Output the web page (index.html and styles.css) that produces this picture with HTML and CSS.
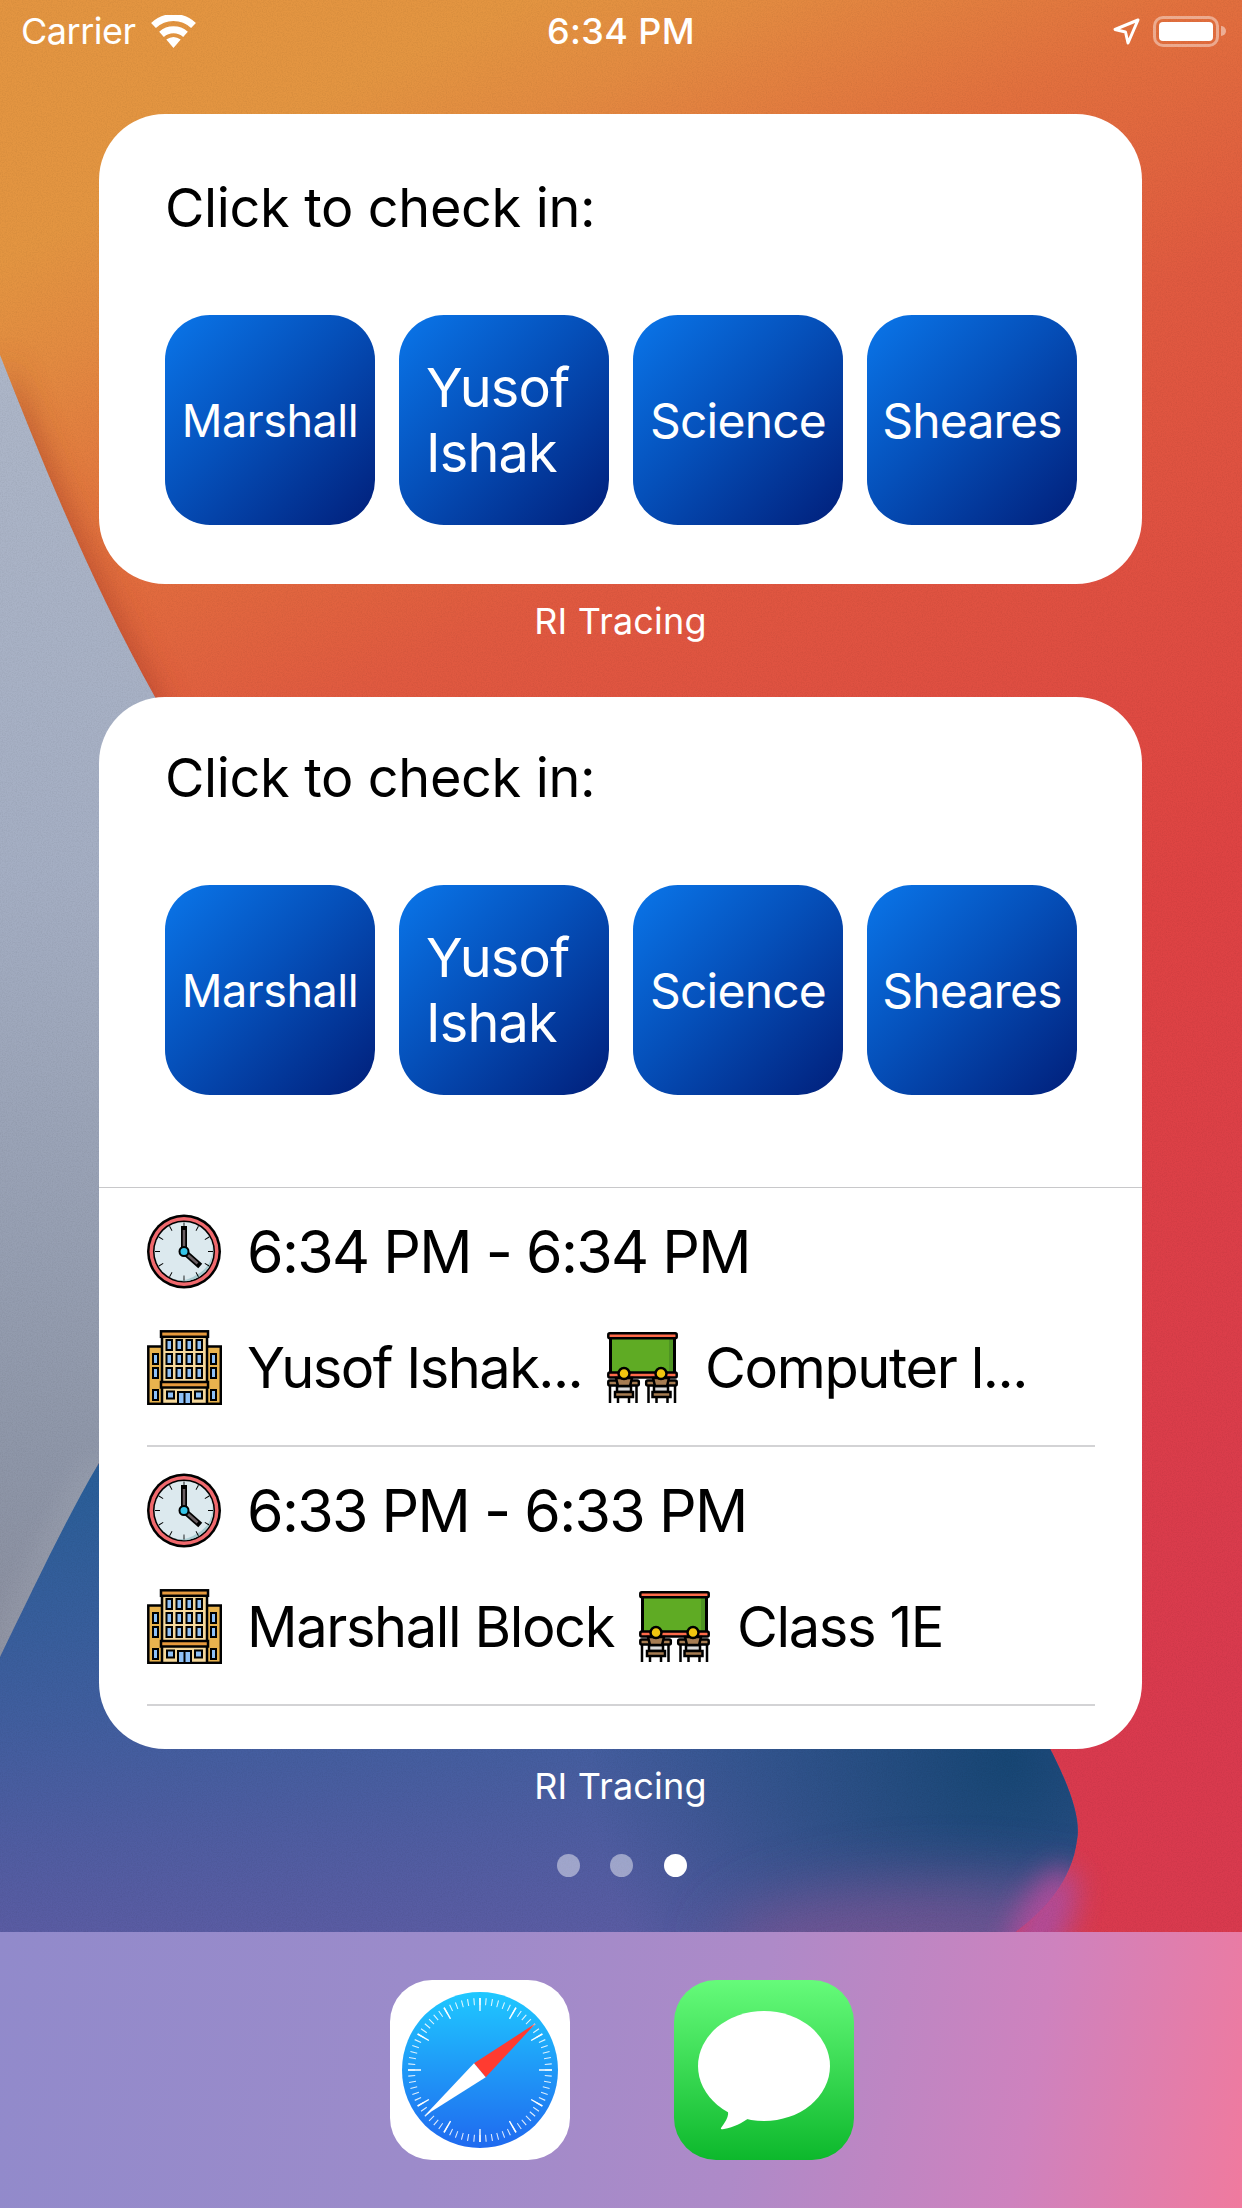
FILE: index.html
```html
<!DOCTYPE html>
<html lang="en">
<head>
<meta charset="utf-8">
<title>RI Tracing</title>
<link rel="stylesheet" href="styles.css">
</head>
<body>
<svg class="defs" width="0" height="0" aria-hidden="true">
  <defs>
    <symbol id="clock" viewBox="0 0 75 75">
      <circle cx="37" cy="37.5" r="37" fill="#000"/>
      <circle cx="37" cy="37.5" r="34.500" fill="#F0696D"/>
      <circle cx="37" cy="37.5" r="31" fill="#000"/>
      <circle cx="37" cy="37.5" r="29.500" fill="#DCE9EE"/>
      <path d="M60 20a29.500 29.500 0 0 1-37 44a26 26 0 0 0 26-3a27 27 0 0 0 11-41z" fill="#A9CBD0"/>
      <circle cx="37" cy="37.5" r="26.500" fill="none" stroke="#000" stroke-width="5" pathLength="360" stroke-dasharray="2 28" stroke-dashoffset="1"/>
      <path d="M37 36V15" stroke="#000" stroke-width="6" stroke-linecap="square"/>
      <path d="M37 36V16" stroke="#6A5F63" stroke-width="2.500"/>
      <path d="M38 38.500L51 50" stroke="#000" stroke-width="6" stroke-linecap="square"/>
      <path d="M38 38.500L50.500 49.500" stroke="#6A5F63" stroke-width="2.500"/>
      <circle cx="37" cy="37.500" r="4.500" fill="#35C5E8" stroke="#000" stroke-width="2"/>
    </symbol>
    <symbol id="building" viewBox="0 0 75 75">
      <g stroke="#000" stroke-width="2.500">
        <rect x="1.300" y="16.500" width="72.500" height="57.300" fill="#E9B34E"/>
        <rect x="15" y="6" width="45" height="68" fill="#F5D89B"/>
        <rect x="14" y="1.300" width="47" height="5.500" fill="#E79A3D"/>
        <rect x="14" y="52" width="47" height="5.500" fill="#E79A3D"/>
      </g>
      <g fill="#8FC1F7" stroke="#000" stroke-width="2">
        <rect x="19.500" y="10" width="5.500" height="10"/><rect x="29.500" y="10" width="5.500" height="10"/><rect x="39.500" y="10" width="5.500" height="10"/><rect x="49.500" y="10" width="5.500" height="10"/>
        <rect x="19.500" y="24" width="5.500" height="10"/><rect x="29.500" y="24" width="5.500" height="10"/><rect x="39.500" y="24" width="5.500" height="10"/><rect x="49.500" y="24" width="5.500" height="10"/>
        <rect x="19.500" y="38" width="5.500" height="10"/><rect x="29.500" y="38" width="5.500" height="10"/><rect x="39.500" y="38" width="5.500" height="10"/><rect x="49.500" y="38" width="5.500" height="10"/>
        <rect x="6" y="24" width="5" height="10"/><rect x="6" y="38" width="5" height="10"/><rect x="6" y="60" width="5" height="10"/>
        <rect x="64" y="24" width="5" height="10"/><rect x="64" y="38" width="5" height="10"/><rect x="64" y="60" width="5" height="10"/>
        <rect x="20" y="61.500" width="7" height="7"/><rect x="48" y="61.500" width="7" height="7"/>
        <rect x="31" y="62" width="13" height="12"/>
      </g>
      <path d="M37.500 62v12" stroke="#000" stroke-width="2"/>
    </symbol>
    <symbol id="classroom" viewBox="0 0 71 71">
      <rect x="3.500" y="5" width="64" height="37" fill="#5FAB24" stroke="#000" stroke-width="3"/>
      <rect x="62" y="6.500" width="4" height="34" fill="#4E9423"/>
      <rect x="1.300" y="1.300" width="68.400" height="5" rx="1.500" fill="#FF6B4A" stroke="#000" stroke-width="2.500"/>
      <rect x="1.300" y="40.500" width="68.400" height="5" rx="1.500" fill="#FF6B4A" stroke="#000" stroke-width="2.500"/>
      <g stroke="#000" stroke-width="2.500">
        <path d="M3 54v17M29.500 54v17M11 64v7M22 64v7M41.500 54v17M68 54v17M49.500 64v7M60.500 64v7" fill="none"/>
        <rect x="10" y="54" width="14" height="6" fill="#DADADA"/>
        <rect x="47" y="54" width="14" height="6" fill="#DADADA"/>
        <rect x="8" y="60" width="18" height="5" fill="#A67C52"/>
        <rect x="45.500" y="60" width="18" height="5" fill="#A67C52"/>
        <rect x="1.300" y="48.500" width="30.500" height="5" rx="1.500" fill="#A67C52"/>
        <rect x="39.200" y="48.500" width="30.500" height="5" rx="1.500" fill="#A67C52"/>
        <path d="M9 46h16l-2 8H11z" fill="#A67C52"/>
        <path d="M46 46h16l-2 8H48z" fill="#A67C52"/>
        <circle cx="17" cy="41.500" r="5.500" fill="#F2C60F"/>
        <circle cx="54" cy="41.500" r="5.500" fill="#F2C60F"/>
      </g>
    </symbol>
  </defs>
</svg>

<svg class="wallpaper" viewBox="0 0 1242 2208" aria-hidden="true">
  <defs>
    <linearGradient id="wp" x1="0.42" y1="0" x2="0.66" y2="0.85">
      <stop offset="0" stop-color="#E39541"/>
      <stop offset="0.06" stop-color="#E38B41"/>
      <stop offset="0.17" stop-color="#E2703E"/>
      <stop offset="0.3" stop-color="#E05A40"/>
      <stop offset="0.6" stop-color="#DE4343"/>
      <stop offset="1" stop-color="#D93A4E"/>
    </linearGradient>
    <linearGradient id="gray" x1="0" y1="350" x2="0" y2="1660" gradientUnits="userSpaceOnUse">
      <stop offset="0" stop-color="#ADB6C8"/>
      <stop offset="0.4" stop-color="#A4AEC3"/>
      <stop offset="0.85" stop-color="#8E96A8"/>
      <stop offset="1" stop-color="#8A8E9E"/>
    </linearGradient>
    <linearGradient id="blue" x1="0" y1="1480" x2="0" y2="1932" gradientUnits="userSpaceOnUse">
      <stop offset="0" stop-color="#2A5E98"/>
      <stop offset="0.5" stop-color="#3F5E9E"/>
      <stop offset="1" stop-color="#5A5CA3"/>
    </linearGradient>
    <radialGradient id="dark" cx="1010" cy="1760" r="420" gradientUnits="userSpaceOnUse">
      <stop offset="0" stop-color="#174674" stop-opacity="1"/>
      <stop offset="1" stop-color="#174674" stop-opacity="0"/>
    </radialGradient>
    <clipPath id="blueClip">
      <path d="M0 1657C35 1585 68 1515 99 1463L620 1400L1040 1730C1065 1775 1082 1815 1077 1840C1072 1880 1045 1910 1015 1932H0Z"/>
    </clipPath>
    <filter id="soft" x="-50%" y="-50%" width="200%" height="200%"><feGaussianBlur stdDeviation="30"/></filter>
    <filter id="soft2" x="-50%" y="-50%" width="200%" height="200%"><feGaussianBlur stdDeviation="14"/></filter>
    <filter id="grain" x="0" y="0" width="100%" height="100%">
      <feTurbulence type="fractalNoise" baseFrequency="0.8" numOctaves="2" seed="4"/>
      <feColorMatrix values="0 0 0 0 0  0 0 0 0 0  0 0 0 0 0  0.9 0 0 0 -0.35"/>
    </filter>
  </defs>
  <rect width="1242" height="2208" fill="url(#wp)"/>
  <path d="M0 355C45 470 95 590 155 697L99 1463L0 1660Z" fill="#A63A28" opacity="0.5" filter="url(#soft2)" transform="translate(8 0)"/>
  <path d="M0 355C45 470 95 590 155 697L300 1000L99 1463L0 1660Z" fill="url(#gray)"/>
  <path d="M99 1463C70 1510 35 1585 0 1657" fill="none" stroke="#C2C6CF" stroke-width="10" opacity="0.4" filter="url(#soft2)"/>
  <g clip-path="url(#blueClip)">
    <rect y="1400" width="1242" height="540" fill="url(#blue)"/>
    <rect y="1400" width="1242" height="540" fill="url(#dark)"/>
    <ellipse cx="950" cy="1950" rx="230" ry="70" fill="#7A5696" opacity="0.8" filter="url(#soft)"/>
  </g>
  <ellipse cx="1042" cy="1925" rx="26" ry="62" fill="#B04E9C" filter="url(#soft2)" opacity="0.95" transform="rotate(25 1042 1925)"/>
  <rect width="1242" height="2208" filter="url(#grain)" opacity="0.12"/>
</svg>

<main class="screen">
  <header class="status">
    <div class="status-left">
      <span class="carrier">Carrier</span>
      <svg class="wifi" viewBox="0 0 47 33" aria-hidden="true">
        <path d="M23.500 33L16.300 24.500Q23.500 19.500 30.700 24.500Z" fill="#fff"/>
        <path d="M11.500 19.300A18 18 0 0 1 35.500 19.300" fill="none" stroke="#fff" stroke-width="7"/>
        <path d="M3.500 10.500A29 29 0 0 1 43.500 10.500" fill="none" stroke="#fff" stroke-width="7"/>
      </svg>
    </div>
    <span class="clock-time">6:34 PM</span>
    <div class="status-right">
      <svg class="arrow" viewBox="0 0 27 27" aria-hidden="true">
        <path d="M25 2L2 11.500L12.500 14L15 25Z" fill="none" stroke="#fff" stroke-width="3" stroke-linejoin="round"/>
      </svg>
      <div class="battery"><div class="battery-fill"></div></div>
      <div class="battery-nub"></div>
    </div>
  </header>

  <div class="widgets">
    <section class="card card-small">
      <h2 class="title">Click to check in:</h2>
      <div class="buttons">
        <div class="btn btn-marshall">Marshall</div>
        <div class="btn btn-yusof">Yusof<br>Ishak</div>
        <div class="btn btn-std">Science</div>
        <div class="btn btn-std">Sheares</div>
      </div>
    </section>
    <div class="app-label">RI Tracing</div>

    <section class="card card-large">
      <h2 class="title">Click to check in:</h2>
      <div class="buttons">
        <div class="btn btn-marshall">Marshall</div>
        <div class="btn btn-yusof">Yusof<br>Ishak</div>
        <div class="btn btn-std">Science</div>
        <div class="btn btn-std">Sheares</div>
      </div>
      <div class="history">
        <div class="entry">
          <div class="line">
            <svg class="icon"><use href="#clock"/></svg>
            <span class="time">6:34 PM - 6:34 PM</span>
          </div>
          <div class="line">
            <svg class="icon"><use href="#building"/></svg>
            <span class="text trunc">Yusof Ishak...</span>
            <svg class="icon room"><use href="#classroom"/></svg>
            <span class="text">Computer l...</span>
          </div>
        </div>
        <div class="entry">
          <div class="line">
            <svg class="icon"><use href="#clock"/></svg>
            <span class="time">6:33 PM - 6:33 PM</span>
          </div>
          <div class="line">
            <svg class="icon"><use href="#building"/></svg>
            <span class="text">Marshall Block</span>
            <svg class="icon room"><use href="#classroom"/></svg>
            <span class="text">Class 1E</span>
          </div>
        </div>
      </div>
    </section>
    <div class="app-label">RI Tracing</div>
  </div>

  <div class="dots">
    <span class="dot"></span>
    <span class="dot"></span>
    <span class="dot dot-on"></span>
  </div>

  <footer class="dock">
    <svg class="app" viewBox="0 0 180 180" aria-label="Safari">
      <defs>
        <linearGradient id="safariBlue" x1="0" y1="0" x2="0" y2="1">
          <stop offset="0" stop-color="#1FC8FF"/>
          <stop offset="1" stop-color="#1F69EF"/>
        </linearGradient>
      </defs>
      <rect width="180" height="180" rx="42" fill="#fff"/>
      <circle cx="90" cy="90" r="78" fill="url(#safariBlue)"/>
      <circle cx="90" cy="90" r="68.500" fill="none" stroke="#fff" stroke-opacity="0.85" stroke-width="7" pathLength="360" stroke-dasharray="0.9 4.100" stroke-dashoffset="0.450"/>
      <circle cx="90" cy="90" r="65.500" fill="none" stroke="#fff" stroke-width="13" pathLength="360" stroke-dasharray="1.300 28.700" stroke-dashoffset="0.650"/>
      <polygon points="145.700,43.300 84,83.300 95.700,97.300" fill="#FF3B30"/>
      <polygon points="34.300,136 84,83.300 95.700,97.300" fill="#fff"/>
    </svg>
    <svg class="app" viewBox="0 0 180 180" aria-label="Messages">
      <defs>
        <linearGradient id="msgGreen" x1="0" y1="0" x2="0" y2="1">
          <stop offset="0" stop-color="#66FB7A"/>
          <stop offset="1" stop-color="#0DB82C"/>
        </linearGradient>
      </defs>
      <rect width="180" height="180" rx="42" fill="url(#msgGreen)"/>
      <ellipse cx="90" cy="86" rx="66" ry="55" fill="#fff"/>
      <path d="M50 125C56 131 56 136 47 148Q46 150 50 149C60 147 68 143 75 138Z" fill="#fff"/>
    </svg>
  </footer>
</main>
</body>
</html>
```

FILE: styles.css
```css
* {
  box-sizing: border-box;
}

html,
body {
  margin: 0;
  padding: 0;
}

body {
  width: 1242px;
  height: 2208px;
  overflow: hidden;
  position: relative;
  font-family: Inter, "Noto Sans", sans-serif;
  color: #000;
}

.defs {
  position: absolute;
}

.wallpaper {
  position: absolute;
  inset: 0;
  width: 1242px;
  height: 2208px;
  display: block;
}

.screen {
  position: relative;
  width: 1242px;
  height: 2208px;
  display: flex;
  flex-direction: column;
}

/* Status bar */
.status {
  height: 62px;
  margin-bottom: 52px;
  padding: 0 16px 0 21px;
  display: grid;
  grid-template-columns: 1fr auto 1fr;
  align-items: center;
  color: #fff;
  font-size: 36px;
  font-weight: 400;
}

.status-left {
  display: flex;
  align-items: center;
  gap: 14px;
}

.carrier {
  letter-spacing: -0.5px;
}

.wifi {
  width: 47px;
  height: 33px;
}

.clock-time {
  margin-right: 5px;
  font-weight: 500;
  letter-spacing: 0.4px;
}

.status-right {
  display: flex;
  align-items: center;
  justify-content: flex-end;
}

.arrow {
  width: 27px;
  height: 27px;
  margin-right: 13px;
}

.battery {
  width: 66px;
  height: 31px;
  padding: 3px;
  border: 3px solid rgba(255, 255, 255, 0.42);
  border-radius: 10px;
}

.battery-fill {
  width: 100%;
  height: 100%;
  background: #fff;
  border-radius: 4px;
}

.battery-nub {
  width: 5px;
  height: 10px;
  margin-left: 2px;
  background: rgba(255, 255, 255, 0.45);
  border-radius: 0 5px 5px 0;
}

/* Widgets */
.widgets {
  padding: 0 100px 0 99px;
}

.card {
  background: #fff;
  border-radius: 66px;
  overflow: hidden;
}

.card-small {
  height: 470px;
  padding-top: 54px;
}

.card-large {
  height: 1052px;
  padding-top: 41px;
}

.title {
  margin: 0 0 67px 66px;
  height: 80px;
  font-size: 54px;
  line-height: 80px;
  font-weight: 400;
  letter-spacing: -0.35px;
}

.buttons {
  display: flex;
  gap: 24px;
  margin-left: 66px;
}

.btn {
  width: 210px;
  height: 210px;
  border-radius: 45px;
  display: flex;
  align-items: center;
  justify-content: center;
  color: #fff;
  background: linear-gradient(135deg, #0A76EA 0%, #0550BA 45%, #011F7A 100%);
}

.btn-marshall {
  font-size: 45px;
  letter-spacing: -0.5px;
}

.btn-std {
  font-size: 48px;
  letter-spacing: -0.8px;
}

.btn-yusof {
  justify-content: flex-start;
  padding-left: 27px;
  font-size: 54px;
  line-height: 65px;
  letter-spacing: -0.8px;
}

.app-label {
  height: 74px;
  margin-bottom: 39px;
  color: #fff;
  text-align: center;
  font-size: 36px;
  line-height: 74px;
  letter-spacing: 0.2px;
}

.history {
  margin-top: 92px;
  padding: 0 47px 0 48px;
  border-top: 1px solid #C8C8CA;
}

.entry {
  height: 259px;
  padding-top: 26px;
  border-bottom: 2px solid #D3D3D5;
}

.line {
  display: flex;
  align-items: center;
  gap: 25px;
  height: 75px;
  margin-bottom: 41px;
  white-space: nowrap;
}

.time {
  font-size: 59px;
  letter-spacing: -1.7px;
}

.text {
  font-size: 56px;
  letter-spacing: -1.4px;
}

.trunc {
  letter-spacing: -1.55px;
}

.icon {
  width: 75px;
  height: 75px;
  flex: none;
}

.room {
  width: 71px;
  height: 71px;
  margin-right: 2px;
}

/* Page dots */
.dots {
  display: flex;
  justify-content: center;
  gap: 30.5px;
  margin-top: -8px;
  padding-left: 1px;
}

.dot {
  width: 23px;
  height: 23px;
  border-radius: 50%;
  background: rgba(255, 255, 255, 0.45);
}

.dot-on {
  background: #fff;
}

/* Dock */
.dock {
  margin-top: auto;
  height: 276px;
  padding: 48px 0 0 2px;
  display: flex;
  justify-content: center;
  gap: 104px;
  background: linear-gradient(100deg, #918ACB 0%, #9C8BCA 35%, #AE8AC8 60%, #CE82BE 82%, #F07A9E 100%);
}

.app {
  width: 180px;
  height: 180px;
}
```
